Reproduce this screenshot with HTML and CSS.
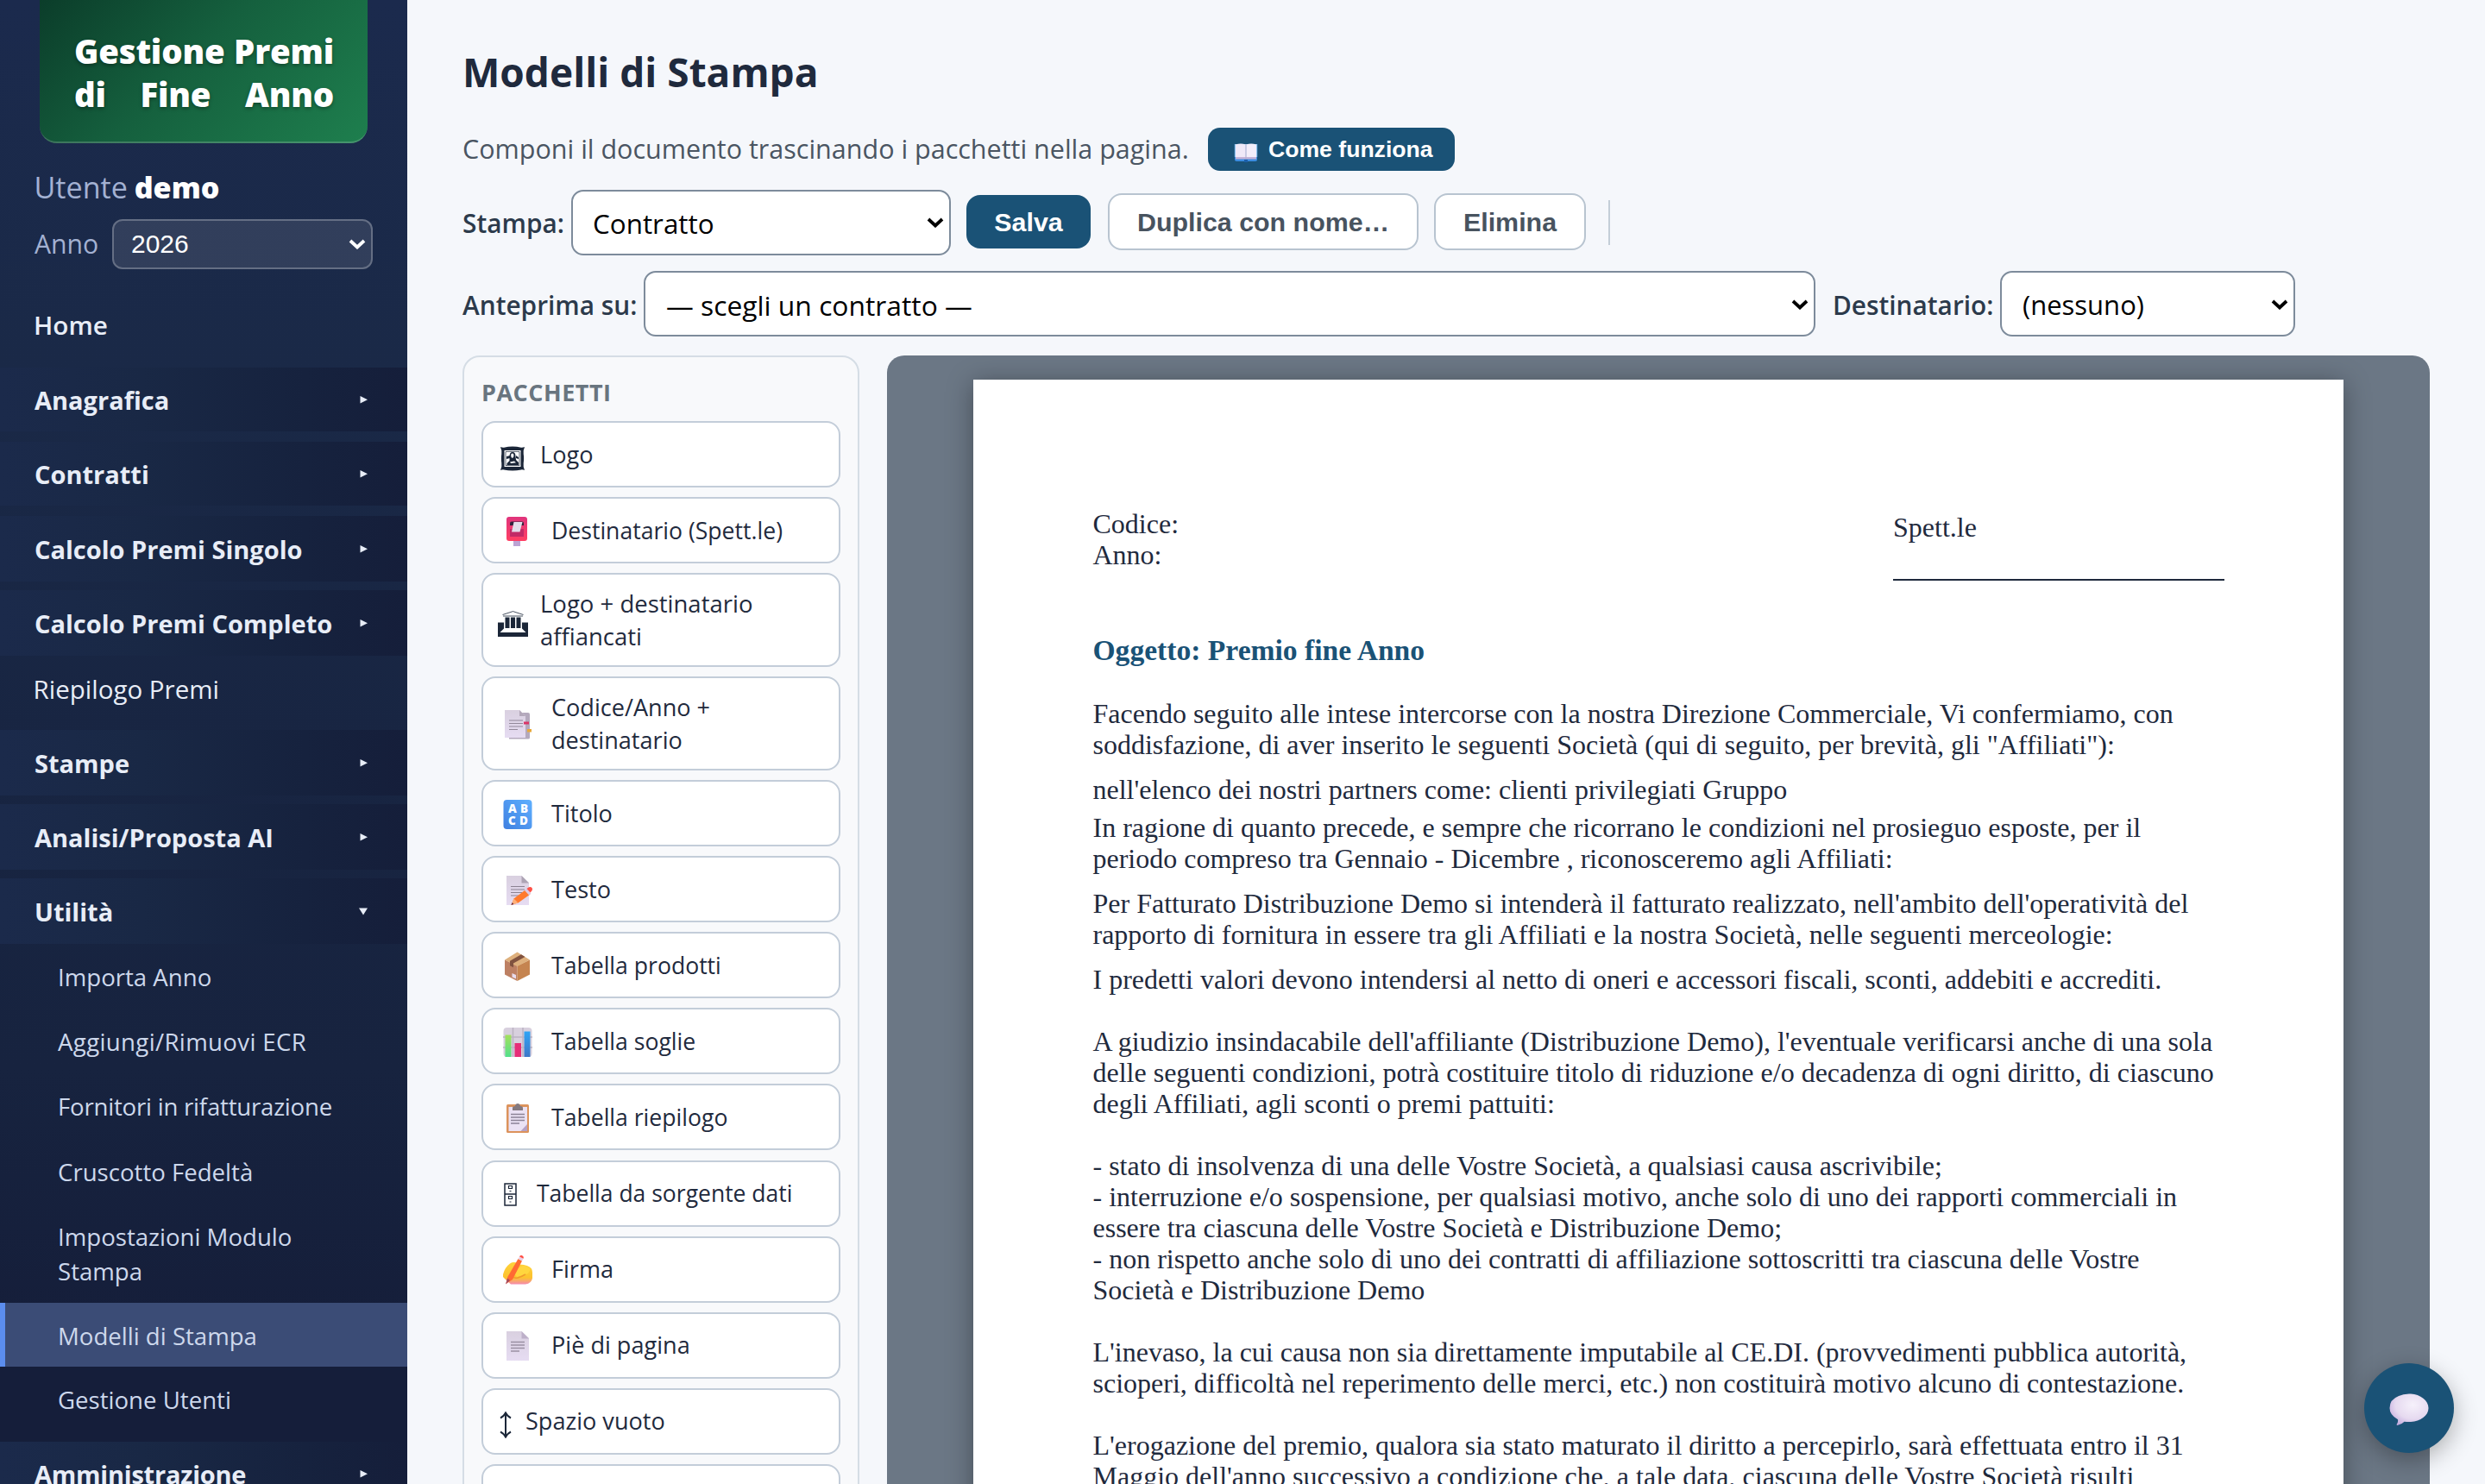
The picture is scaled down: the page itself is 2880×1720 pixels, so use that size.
FILE: index.html
```html
<!DOCTYPE html>
<html lang="it">
<head>
<meta charset="utf-8">
<title>Modelli di Stampa</title>
<link rel="stylesheet" href="styles.css">
</head>
<body>
<svg class="defs" width="0" height="0" aria-hidden="true">
  <defs>
    <linearGradient id="g-paper" x1="0" y1="0" x2="0" y2="1"><stop offset="0" stop-color="#d9d0e0"/><stop offset="1" stop-color="#e6dcf2"/></linearGradient>
    <linearGradient id="g-red" x1="0" y1="0" x2="0" y2="1"><stop offset="0" stop-color="#e0347c"/><stop offset="1" stop-color="#ff3f63"/></linearGradient>
    <linearGradient id="g-blue" x1="1" y1="0" x2="0" y2="1"><stop offset="0" stop-color="#5fb0ff"/><stop offset="1" stop-color="#3f7fe0"/></linearGradient>
    <linearGradient id="g-bar-g" x1="0" y1="0" x2="0" y2="1"><stop offset="0" stop-color="#a4e05c"/><stop offset="1" stop-color="#52e08c"/></linearGradient>
    <linearGradient id="g-bar-b" x1="0" y1="0" x2="0" y2="1"><stop offset="0" stop-color="#2fa4f5"/><stop offset="1" stop-color="#3e78c8"/></linearGradient>
    <linearGradient id="g-hand" x1="0" y1="0" x2="0" y2="1"><stop offset="0" stop-color="#ffd23a"/><stop offset=".7" stop-color="#fcc22e"/><stop offset="1" stop-color="#f58ab0"/></linearGradient>
    <radialGradient id="g-bubble" cx=".6" cy=".35" r=".75"><stop offset="0" stop-color="#f6f1fb"/><stop offset=".6" stop-color="#e6daf0"/><stop offset="1" stop-color="#bfa5dc"/></radialGradient>
    <symbol id="chevron" viewBox="0 0 20 12"><path d="M2 2l8 7.5L18 2" fill="none" stroke="currentColor" stroke-width="3.8"/></symbol>
    <symbol id="tri-right" viewBox="0 0 9 9"><path d="M.5 0L9 4.2.5 8.6z" fill="currentColor"/></symbol>
    <symbol id="tri-down" viewBox="0 0 10 9"><path d="M0 .5h10L5 8.5z" fill="currentColor"/></symbol>
  </defs>
</svg>
<div class="app">
  <aside class="sidebar">
    <div class="brand"><span>Gestione Premi</span><span>di Fine Anno</span></div>
    <div class="user">Utente <b>demo</b></div>
    <div class="year">
      <span class="year-label">Anno</span>
      <div class="year-select" role="combobox">2026<svg class="chev"><use href="#chevron"/></svg></div>
    </div>
    <nav class="nav">
      <a class="link home">Home</a>
      <a class="group compact">Anagrafica<svg class="tri"><use href="#tri-right"/></svg></a>
      <a class="group compact">Contratti<svg class="tri"><use href="#tri-right"/></svg></a>
      <a class="group"><span>Calcolo Premi Singolo</span><svg class="tri"><use href="#tri-right"/></svg></a>
      <a class="group last">Calcolo Premi Completo<svg class="tri"><use href="#tri-right"/></svg></a>
      <a class="link plain">Riepilogo Premi</a>
      <a class="group">Stampe<svg class="tri"><use href="#tri-right"/></svg></a>
      <a class="group">Analisi/Proposta AI<svg class="tri"><use href="#tri-right"/></svg></a>
      <a class="group last">Utilità<svg class="tri down"><use href="#tri-down"/></svg></a>
      <div class="sub">
        <a>Importa Anno</a>
        <a class="wide">Aggiungi/Rimuovi ECR</a>
        <a class="narrow">Fornitori in rifatturazione</a>
        <a>Cruscotto Fedeltà</a>
        <a>Impostazioni Modulo<br>Stampa</a>
        <a class="active">Modelli di Stampa</a>
        <a>Gestione Utenti</a>
      </div>
      <a class="group"><span class="narrow">Amministrazione</span><svg class="tri"><use href="#tri-right"/></svg></a>
    </nav>
  </aside>

  <main class="main">
    <h1>Modelli di Stampa</h1>
    <div class="intro">
      <p>Componi il documento trascinando i pacchetti nella pagina.</p>
      <button class="btn-help">
        <svg width="28" height="22" viewBox="0 0 28 22"><path d="M1 1h26v18q0 2-2 2H3q-2 0-2-2z" fill="#3c8de0"/><path d="M.8 1h26.4v15H.8z" fill="#8fc4f2"/><path d="M2 1.500Q8-.5 13.700 1.500V18H2z" fill="#efe9f8"/><path d="M14.300 1.500Q20-.5 26 1.500V18H14.300z" fill="#f3eefa"/><path d="M2 16h24v2.500H2z" fill="#c3b3d8"/><path d="M13.600 1.500h.8V18h-.8z" fill="#b9acc9"/><path d="M12 19h4v3h-4z" fill="#1c5fa8"/></svg>
        Come funziona
      </button>
    </div>

    <div class="bar bar-one">
      <span class="lbl lbl-print">Stampa:</span>
      <div class="select sel-print" role="combobox">Contratto<svg class="chev"><use href="#chevron"/></svg></div>
      <button class="btn primary">Salva</button>
      <button class="btn dup">Duplica con nome…</button>
      <button class="btn del">Elimina</button>
      <span class="sep"></span>
    </div>
    <div class="bar bar-two">
      <span class="lbl lbl-prev">Anteprima su:</span>
      <div class="select sel-prev" role="combobox">— scegli un contratto —<svg class="chev"><use href="#chevron"/></svg></div>
      <span class="lbl lbl-dest">Destinatario:</span>
      <div class="select sel-dest" role="combobox">(nessuno)<svg class="chev"><use href="#chevron"/></svg></div>
    </div>

    <div class="work">
      <section class="panel">
        <h2>PACCHETTI</h2>
        <div class="item"><span class="ico mono"><svg width="28" height="29" viewBox="0 0 28 29"><path d="M0 1q2 1 4 .8Q14-.6 24 1.800q2 .2 4-.8-.8 3-1.300 4v4q.8 5.500 0 11v4q.5 1.500 1.300 4-2-.8-4-.6Q14 29.500 4 27.400q-2-.2-4 .6.800-2.500 1.300-4v-4q-.8-5.500 0-11V5Q.8 4 0 1z" fill="#1b2638"/><path d="M4.500 5h19v19h-19z" fill="#fff"/><path d="M6 6.500h16v16H6z" fill="#fff" stroke="#1b2638" stroke-width=".7"/><path d="M7 12l4-1v3l-4 1zM21 13l-3-2v3l3 1z" fill="#1b2638"/><path d="M10.500 12q0-5 3.500-5t3.500 5l.5 4 3 3v3H7.500v-2l3-3z" fill="#1b2638"/><path d="M12.300 9.500q1.600-2 3 0 .6 3.500-1.500 4.500-2-1-1.500-4.500zM11 18.500l5-1 2 1.800-6 .7z" fill="#fff"/></svg></span><span>Logo</span></div>
        <div class="item"><span class="ico"><svg width="34" height="34" viewBox="0 0 34 34"><path d="M12 26h8v8h-8z" fill="#bba4d4"/><rect x="4" width="24" height="28" rx="3" fill="url(#g-red)"/><path d="M8 14h16v9H8z" fill="#c22a66"/><path d="M8 7.500q0-2 2-2h12q2 0 2 2V10H8z" fill="#33203c"/><path d="M12.500 6h10l-3 11.500H10z" fill="#e3dcea"/></svg></span><span class="tighter">Destinatario (Spett.le)</span></div>
        <div class="item tall"><span class="ico mono"><svg width="35" height="30" viewBox="0 0 35 30"><path d="M5.500 4.500L17.500.6l12 3.900" fill="none" stroke="#1b2638" stroke-width=".8"/><path d="M6 6h23" stroke="#1b2638" stroke-width=".8"/><path d="M0 13.500h35V30H0z" fill="#1b2638"/><path d="M7 7.500h21V21H7z" fill="#fff"/><path d="M8.500 7.500h5V20h-5zM15 7.500h5V20h-5zM21.500 7.500h5V20h-5z" fill="#1b2638"/><path d="M7 20.500h21l4.500 4.500h-30z" fill="#fff"/></svg></span><span class="looser">Logo + destinatario<br>affiancati</span></div>
        <div class="item tall"><span class="ico"><svg width="34" height="34" viewBox="0 0 34 34"><path d="M7 3h22q2 0 2 2v27q0 1.500-2 1.500H7z" fill="#b4a9bd"/><path d="M2 0h17l7 7v25H2z" fill="url(#g-paper)"/><path d="M19 0l7 7h-7z" fill="#b3a8ba"/><path d="M7 12h16M7 15.500h16M7 19h16M7 22.500h10" stroke="#928899" stroke-width="1.200"/><path d="M24 13.500h6v3h-6z" fill="#db3567"/><path d="M28 22h5v3.500h-5z" fill="#e8a83a"/></svg></span><span>Codice/Anno +<br>destinatario</span></div>
        <div class="item"><span class="ico"><svg width="34" height="34" viewBox="0 0 34 34"><rect x=".5" width="33" height="34" rx="4" fill="url(#g-blue)"/><g fill="#fff" font-family="Open Sans, sans-serif" font-weight="800" font-size="13.500"><text x="6" y="15">A</text><text x="20" y="15">B</text><text x="6" y="29">C</text><text x="19" y="29">D</text></g></svg></span><span>Titolo</span></div>
        <div class="item"><span class="ico"><svg width="34" height="34" viewBox="0 0 34 34"><path d="M4 0h17.500l8.500 8v26H4z" fill="url(#g-paper)"/><path d="M21.500 0l8.500 8.500h-8.500z" fill="#ada4b4"/><path d="M9 12.500h16M9 16h16M9 19.500h13M9 23h9" stroke="#8b8292" stroke-width="1.200"/><path d="M10 33.500l2.500-7L26.500 16l5 5.500-14 10z" fill="#ff7a2e"/><path d="M25 17l2.500-2 5 5.500L30 22.500z" fill="#dccbe4"/><path d="M27.500 15l2.500-1.700q2-1 3.500.7 1 1.500-.2 3.500l-1.800 2z" fill="#ff5147"/><path d="M12.500 26.500l-3 7.500 8-2.500z" fill="#ffb07a"/><path d="M10.600 31l-1.300 3 3.200-1z" fill="#6e3040"/></svg></span><span>Testo</span></div>
        <div class="item"><span class="ico"><svg width="34" height="34" viewBox="0 0 34 34"><path d="M2 9.500l14.500 7V34L2 26.500z" fill="#bd8063"/><path d="M31 9.500l-14.500 7V34L31 26.500z" fill="#c58450"/><path d="M16.500.5L31 9.500l-14.500 7.500L2 9.500z" fill="#deb07d"/><path d="M21 3.300l4.500 2.800L12 13.500v4.800l-4-2v-5.500z" fill="#80523f"/><path d="M10.500 25l4.500 2v4.500l-4.500-2z" fill="#e8dced"/></svg></span><span class="tighter">Tabella prodotti</span></div>
        <div class="item"><span class="ico"><svg width="34" height="34" viewBox="0 0 34 34"><rect x=".5" width="33" height="34" rx="4" fill="#d8d0de"/><path d="M11.500 0v34M23 0v34M0 11h34M0 23h34" stroke="#bbb2c2" stroke-width="1.500"/><path d="M2.500 8.500h7V34h-7z" fill="url(#g-bar-g)"/><path d="M13.500 18h7.500v16h-7.500z" fill="#e62d78"/><path d="M24.500 4.500h7V34h-7z" fill="url(#g-bar-b)"/></svg></span><span class="tighter">Tabella soglie</span></div>
        <div class="item"><span class="ico"><svg width="34" height="34" viewBox="0 0 34 34"><rect x="4" y="1" width="26" height="33" rx="1.500" fill="#dc935c"/><path d="M6.500 4h21.500v21l-6 7H6.500z" fill="#ebe2f4"/><path d="M28 24v8h-7.500z" fill="#b5a1c6"/><path d="M9 12.500h16M9 16h16M9 19.500h16M9 23h10" stroke="#8c8396" stroke-width="1.300"/><path d="M11 8V5q0-2 3-2 .5-3 3-3t3 3q3 0 3 2v3z" fill="#84797f"/></svg></span><span class="tighter">Tabella riepilogo</span></div>
        <div class="item"><span class="ico mono cab"><svg width="15" height="27" viewBox="0 0 15 27"><path d="M1 1h13v25H1zM1 13h13" fill="none" stroke="#1b2638" stroke-width="1.500"/><path d="M5.500 3.500h4v3h-4zM5.500 15.500h4v3h-4z" fill="none" stroke="#1b2638" stroke-width="1.200"/><path d="M6.500 9.500h2M6.500 22h2" stroke="#1b2638" stroke-width="1.200"/></svg></span><span class="tightest">Tabella da sorgente dati</span></div>
        <div class="item"><span class="ico"><svg width="34" height="34" viewBox="0 0 34 34"><path d="M0 22Q2 14 8 9.500q4-2.500 9-.5l2.500 1.500q10 .5 13.500 5 1.500 3 1 11-1 6-8 7H9Q3 28 0 25z" fill="url(#g-hand)"/><path d="M11 19l12-7q5 0 9 4l-3 5-13 4z" fill="#ffd63e"/><path d="M9 24q4 3 8 2t9-4" fill="none" stroke="#f09a2e" stroke-width="1.500"/><path d="M3.500 33l1.800-8L17.500 4l4.500 2.500L11 28z" fill="#ff6a33"/><path d="M17.500 4l1.700-2.500 4.300 2.300L22 6.500z" fill="#e8cfe6"/><path d="M19 1.500q1-2 3.200-1.300 2.300 1 1.300 3.600z" fill="#ff4d43"/><path d="M5 26.500l-2 7 5-4.500z" fill="#a34a5e"/></svg></span><span>Firma</span></div>
        <div class="item"><span class="ico"><svg width="34" height="34" viewBox="0 0 34 34"><path d="M4 0h17.500l8.500 8v26H4z" fill="url(#g-paper)"/><path d="M21.500 0l8.500 8.500h-8.500z" fill="#bdb0c9"/><path d="M9 12.500h16M9 16h16M9 19.500h16M9 23h10" stroke="#9a90a3" stroke-width="1.400"/></svg></span><span>Piè di pagina</span></div>
        <div class="item"><span class="ico mono arrow"><svg width="14" height="31" viewBox="0 0 14 31"><path d="M7 2v27M1 7.500q4-2 6-6 2 4 6 6M1 23.500q4 2 6 6 2-4 6-6" fill="none" stroke="#1b2638" stroke-width="2"/></svg></span><span>Spazio vuoto</span></div>
        <div class="item"></div>
      </section>

      <section class="editor">
        <article class="sheet">
          <header class="head">
            <div>Codice:<br>Anno:</div>
            <div class="to">Spett.le</div>
          </header>
          <h3>Oggetto: Premio fine Anno</h3>
          <p class="g16">Facendo seguito alle intese intercorse con la nostra Direzione Commerciale, Vi confermiamo, con<br>soddisfazione, di aver inserito le seguenti Società (qui di seguito, per brevità, gli "Affiliati"):</p>
          <p class="g8">nell'elenco dei nostri partners come: clienti privilegiati Gruppo</p>
          <p class="g16">In ragione di quanto precede, e sempre che ricorrano le condizioni nel prosieguo esposte, per il<br>periodo compreso tra Gennaio - Dicembre , riconosceremo agli Affiliati:</p>
          <p class="g16">Per Fatturato Distribuzione Demo si intenderà il fatturato realizzato, nell'ambito dell'operatività del<br>rapporto di fornitura in essere tra gli Affiliati e la nostra Società, nelle seguenti merceologie:</p>
          <p class="g36">I predetti valori devono intendersi al netto di oneri e accessori fiscali, sconti, addebiti e accrediti.</p>
          <p class="g36">A giudizio insindacabile dell'affiliante (Distribuzione Demo), l'eventuale verificarsi anche di una sola<br>delle seguenti condizioni, potrà costituire titolo di riduzione e/o decadenza di ogni diritto, di ciascuno<br>degli Affiliati, agli sconti o premi pattuiti:</p>
          <p class="g36">- stato di insolvenza di una delle Vostre Società, a qualsiasi causa ascrivibile;<br>- interruzione e/o sospensione, per qualsiasi motivo, anche solo di uno dei rapporti commerciali in<br>essere tra ciascuna delle Vostre Società e Distribuzione Demo;<br>- non rispetto anche solo di uno dei contratti di affiliazione sottoscritti tra ciascuna delle Vostre<br>Società e Distribuzione Demo</p>
          <p class="g36">L'inevaso, la cui causa non sia direttamente imputabile al CE.DI. (provvedimenti pubblica autorità,<br>scioperi, difficoltà nel reperimento delle merci, etc.) non costituirà motivo alcuno di contestazione.</p>
          <p>L'erogazione del premio, qualora sia stato maturato il diritto a percepirlo, sarà effettuata entro il 31<br>Maggio dell'anno successivo a condizione che, a tale data, ciascuna delle Vostre Società risulti</p>
        </article>
      </section>
    </div>
  </main>
</div>
<button class="fab" aria-label="Chat"><svg width="46" height="38" viewBox="0 0 46 38"><path d="M23 .5C35 .5 45.500 7.500 45.500 17S35 33 23 33q-3 0-5.500-.3-3 3.300-8 4.300-1.500-.2-.5-1.700 1.500-2.500 1-5Q.5 25 .5 17 .5 7 11 3 16 .5 23 .5z" fill="url(#g-bubble)"/></svg></button>
</body>
</html>
```

FILE: styles.css
```css
* { box-sizing: border-box; }

body {
  margin: 0;
  height: 1720px;
  overflow: hidden;
  background: #f5f7fb;
  color: #1f2a3d;
  font-family: "Open Sans", "Noto Sans", sans-serif;
}

h1, h2, h3, p { margin: 0; }
button { border: 0; padding: 0; margin: 0; }
.defs { position: absolute; }

.app {
  display: flex;
  height: 1720px;
  overflow: hidden;
}

/* ---------- sidebar ---------- */
.sidebar {
  flex: 0 0 472px;
  background: linear-gradient(180deg, #1b2a4d 0, #1a2947 25%, #182542 50%, #17233f 72%, #151e3a 90%, #151e3a 100%);
  color: #e8edf7;
  overflow: hidden;
}

.brand {
  width: 380px;
  height: 166px;
  margin: 0 46px;
  padding: 34px 39px 0 40px;
  border-radius: 0 0 20px 20px;
  border-bottom: 2px solid rgba(255, 255, 255, .18);
  background: linear-gradient(135deg, #0b3d2a 0%, #15603e 45%, #1e7f4e 100%);
  background-origin: border-box;
  color: #fff;
  font-size: 38.4px;
  font-weight: 800;
  line-height: 50px;
  letter-spacing: -.2px;
  text-shadow: 0 2px 4px rgba(0, 0, 0, .35);
}
.brand span {
  display: block;
  text-align: justify;
  text-align-last: justify;
}

.user {
  margin: 28px 0 0 39.5px;
  font-size: 34.1px;
  line-height: 46px;
  color: #a3b1d2;
}
.user b { margin-left: -1px; color: #fff; font-weight: 800; }

.year {
  display: flex;
  align-items: center;
  margin: 14px 40px 0 40px;
}
.year-label {
  width: 90px;
  margin-top: -1px;
  font-size: 30.2px;
  line-height: 40px;
  color: #a3b1d2;
}
.year-select {
  display: flex;
  align-items: center;
  justify-content: space-between;
  width: 302px;
  height: 58px;
  padding: 0 6px 0 20px;
  border: 2px solid rgba(255, 255, 255, .25);
  border-radius: 12px;
  background: rgba(255, 255, 255, .1);
  color: #fff;
  font: 30px "Liberation Sans", Arial, sans-serif;
}

.chev {
  width: 20px;
  height: 12px;
  flex: none;
}

.nav {
  margin-top: 26px;
  font-size: 29px;
}
.link {
  display: flex;
  align-items: center;
  height: 76px;
  padding-left: 40px;
}
.home { margin-bottom: 12px; padding-left: 39px; font-weight: 600; font-size: 29.7px; }
.plain { height: 78px; margin-bottom: 8px; padding: 0 0 2px 38.5px; font-size: 29.5px; }

.group {
  display: flex;
  align-items: center;
  justify-content: space-between;
  height: 76px;
  margin-bottom: 10px;
  padding: 0 46px 0 40px;
  background: linear-gradient(90deg, #1b2a4b 0%, #192845 35%, #16223e 75%, #151e3a 100%);
  font-weight: 700;
}
.group.compact { height: 74px; margin-bottom: 12px; }
.group.last { margin-bottom: 0; }
.tri { width: 9px; height: 9px; }
.tri.down { width: 10px; }
.wide { letter-spacing: .35px; }
.narrow { letter-spacing: -.22px; }

.sub {
  padding-bottom: 11px;
  color: #cdd8ec;
  font-size: 27.6px;
  line-height: 40.2px;
}
.sub a {
  display: block;
  padding: 18px 20px 17px 67px;
}
.sub .active {
  padding: 18px 20px 16px 61px;
  border-left: 6px solid #5b8dee;
  background: #3b4c76;
}

/* ---------- main ---------- */
.main {
  flex: 1;
  min-width: 0;
  padding: 51px 64px 0;
}
h1 {
  margin-bottom: 33px;
  font-size: 46px;
  font-weight: 700;
  line-height: 64px;
}

.intro {
  display: flex;
  align-items: center;
  height: 50px;
  font-size: 30.5px;
  color: #4a5562;
}
.intro p {
  width: 864px;
  margin-top: -2px;
  line-height: 42px;
  white-space: nowrap;
}
.btn-help {
  display: flex;
  align-items: center;
  gap: 12px;
  width: 286px;
  height: 50px;
  padding-left: 30px;
  border-radius: 14px;
  background: #1a5276;
  color: #fff;
  font: 700 26.6px "Liberation Sans", Arial, sans-serif;
  white-space: nowrap;
}
.btn-help svg { margin-top: 8px; }

.bar { display: flex; align-items: center; height: 76px; }
.bar-one { margin-top: 22px; }
.bar-two { margin-top: 18px; }

.lbl {
  padding-top: 1px;
  font-size: 29.8px;
  font-weight: 600;
  line-height: 42px;
  color: #2c3a4b;
  white-space: nowrap;
}
.lbl-print { width: 126px; }
.lbl-prev { width: 210px; padding-top: 3px; }
.lbl-dest { width: 194px; margin-left: 20px; padding-top: 3px; }

.select {
  display: flex;
  align-items: center;
  justify-content: space-between;
  height: 76px;
  padding: 0 6px 0 23px;
  border: 2px solid #7d8b9b;
  border-radius: 14px;
  background: #fff;
  color: #000;
  font-size: 31.4px;
  font-weight: 500;
  white-space: nowrap;
}
.sel-print { width: 440px; margin-right: 18px; }
.sel-prev { width: 1358px; padding: 2px 6px 0 24px; font-size: 31.8px; }
.sel-dest { width: 342px; padding: 2px 6px 0 24px; font-size: 31px; }

.btn {
  height: 66px;
  margin-bottom: 2px;
  border: 2px solid #b8c4d0;
  border-radius: 16px;
  background: #fff;
  color: #48535f;
  font: 700 30.4px "Liberation Sans", Arial, sans-serif;
  white-space: nowrap;
}
.primary {
  width: 144px;
  height: 62px;
  border: 0;
  background: #1a5276;
  color: #fff;
}
.dup { width: 360px; margin-left: 20px; }
.del { width: 176px; margin-left: 18px; }
.sep {
  width: 2px;
  height: 52px;
  margin-left: 26px;
  background: #c4ced8;
}

.work {
  display: flex;
  align-items: flex-start;
  gap: 32px;
  margin-top: 22px;
}

.panel {
  flex: 0 0 460px;
  height: 1340px;
  padding: 22px 20px 0;
  border: 2px solid #d5dde5;
  border-radius: 20px;
  background: #f8f9fb;
}
.panel h2 {
  margin-bottom: 14px;
  font-size: 27px;
  line-height: 38px;
  letter-spacing: .5px;
  color: #69757f;
}
.item {
  display: flex;
  align-items: center;
  height: 77px;
  margin-bottom: 11.100px;
  border: 2px solid #c3cdd9;
  border-radius: 16px;
  background: #fff;
  color: #1f2a3d;
  font-size: 27.1px;
  line-height: 38px;
  white-space: nowrap;
}
.item.tall { height: 108.850px; }
.tighter { font-size: 26.6px; }
.tightest { font-size: 26.5px; }
.looser { font-size: 27.5px; }
.ico {
  display: flex;
  justify-content: center;
  width: 79px;
  padding: 2px 0 0 1px;
}
.ico.mono { width: 66px; padding: 9px 0 0 2px; }
.ico.cab { width: 62px; padding: 2px 0 0; }
.ico.arrow { width: 49px; padding-left: 2px; }

.editor {
  flex: 1;
  height: 1340px;
  padding: 28px 100px 0;
  border-radius: 20px;
  background: #6b7785;
}
.sheet {
  height: 2245px;
  padding: 149px 138px 0 138.500px;
  background: #fff;
  box-shadow: 0 4px 28px rgba(0, 0, 0, .35);
  font: 32px/36px "Liberation Serif", "Times New Roman", serif;
  white-space: nowrap;
}
.head {
  display: flex;
  justify-content: space-between;
  height: 146px;
}
.to {
  width: 384px;
  height: 84px;
  padding-top: 4px;
  border-bottom: 2px solid #1f2a3d;
}
.sheet h3 {
  margin-bottom: 36px;
  font-size: 33.6px;
  line-height: 38px;
  color: #1a5276;
}
.g8 { margin-bottom: 8px; }
.g16 { margin-bottom: 16px; }
.g36 { margin-bottom: 36px; }

.fab {
  position: absolute;
  left: 2740px;
  top: 1580px;
  display: flex;
  align-items: center;
  justify-content: center;
  width: 104px;
  height: 104px;
  border-radius: 50%;
  background: #1a5276;
  box-shadow: 0 8px 28px rgba(0, 0, 0, .3);
}
.fab svg { margin-top: 4px; }
```
